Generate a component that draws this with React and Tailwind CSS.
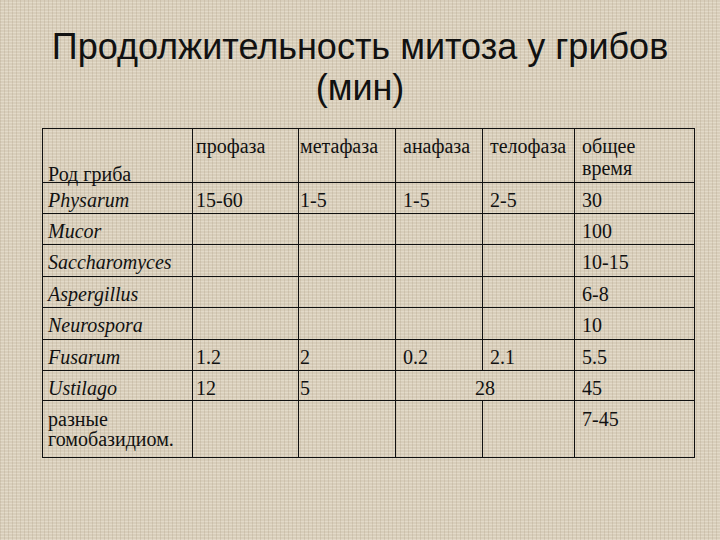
import React from "react";

const rows = [
  { name: "Physarum", italic: true, cells: ["15-60", "1-5", "1-5", "2-5"], total: "30", h: "h-[31px]" },
  { name: "Mucor", italic: true, cells: ["", "", "", ""], total: "100", h: "h-[31px]" },
  { name: "Saccharomyces", italic: true, cells: ["", "", "", ""], total: "10-15", h: "h-[32px]" },
  { name: "Aspergillus", italic: true, cells: ["", "", "", ""], total: "6-8", h: "h-[31px]" },
  { name: "Neurospora", italic: true, cells: ["", "", "", ""], total: "10", h: "h-[32px]" },
  { name: "Fusarum", italic: true, cells: ["1.2", "2", "0.2", "2.1"], total: "5.5", h: "h-[31px]" },
];

// per-column left padding, measured from the slide
const pad = ["pl-[5px]", "pl-[3px]", "pl-[1px]", "pl-[7px]", "pl-[7px]", "pl-[7px]"];

const cell = "border border-[#111] align-top pt-[7px] pr-0";

export default function App() {
  return (
    <div className="w-[720px] h-[540px] overflow-hidden bg-[#d8cebb] bg-[repeating-linear-gradient(90deg,rgba(150,130,100,0.18)_0px,rgba(150,130,100,0.18)_1px,transparent_1px,transparent_4px),repeating-linear-gradient(0deg,rgba(255,250,236,0.28)_0px,rgba(255,250,236,0.28)_1px,transparent_1px,transparent_3px)]">
      {/* title */}
      <h1 className="pt-[26px] text-center font-['Liberation_Sans',Arial,sans-serif] text-[36px] leading-[41px] font-normal text-[#111]">
        Продолжительность митоза у грибов
        <br />
        (мин)
      </h1>

      <table className="mt-[20px] ml-[42px] w-[652px] table-fixed border-collapse font-['Liberation_Serif',serif] text-[20px] leading-[21.5px] text-[#111]">
        <colgroup>
          <col className="w-[150px]" />
          <col className="w-[106px]" />
          <col className="w-[97px]" />
          <col className="w-[87px]" />
          <col className="w-[92px]" />
          <col className="w-[120px]" />
        </colgroup>
        <tbody>
          <tr className="h-[54px]">
            <td className={`${cell} ${pad[0]} !pt-[37px] leading-[16px] whitespace-nowrap`}>Род гриба</td>
            <td className={`${cell} ${pad[1]}`}>профаза</td>
            <td className={`${cell} ${pad[2]} whitespace-nowrap`}>метафаза</td>
            <td className={`${cell} ${pad[3]}`}>анафаза</td>
            <td className={`${cell} ${pad[4]} whitespace-nowrap`}>телофаза</td>
            <td className={`${cell} ${pad[5]}`}>
              общее
              <br />
              время
            </td>
          </tr>

          {rows.map((r) => (
            <tr key={r.name} className={r.h}>
              <td className={`${cell} ${pad[0]} whitespace-nowrap ${r.italic ? "italic" : ""}`}>{r.name}</td>
              {r.cells.map((c, i) => (
                <td key={i} className={`${cell} ${pad[i + 1]}`}>{c}</td>
              ))}
              <td className={`${cell} ${pad[5]}`}>{r.total}</td>
            </tr>
          ))}

          <tr className="h-[30px]">
            <td className={`${cell} ${pad[0]} italic`}>Ustilago</td>
            <td className={`${cell} ${pad[1]}`}>12</td>
            <td className={`${cell} ${pad[2]}`}>5</td>
            <td colSpan={2} className={`${cell} text-center`}>28</td>
            <td className={`${cell} ${pad[5]}`}>45</td>
          </tr>

          <tr className="h-[57px]">
            <td className={`${cell} ${pad[0]} !pt-[8px] leading-[20px] whitespace-nowrap`}>
              разные
              <br />
              гомобазидиом.
            </td>
            <td className={cell}></td>
            <td className={cell}></td>
            <td className={cell}></td>
            <td className={cell}></td>
            <td className={`${cell} ${pad[5]} !pt-[8px]`}>7-45</td>
          </tr>
        </tbody>
      </table>
    </div>
  );
}
